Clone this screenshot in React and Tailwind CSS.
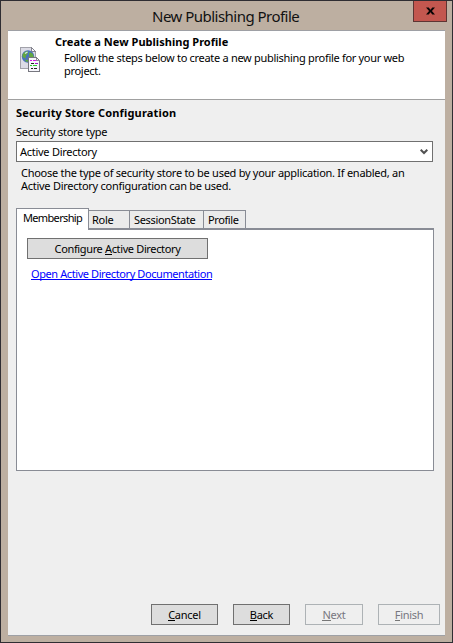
import React from "react";

const GlobePageIcon = () => (
  <svg className="shrink-0" width="20" height="25" viewBox="0 0 20 25" shapeRendering="crispEdges">
    <path d="M0.500 .5h11l4 4v17H.5z" fill="#dcdce6" stroke="#a2a2aa" />
    <path d="M11.500 .5v4h4z" fill="#fafaff" stroke="#85858f" />
    <g shapeRendering="auto">
      <circle cx="8" cy="9.500" r="6.200" fill="#4a72bd" />
      <path d="M2.500 7.500C4 4.800 6 4 8 4.300L7.500 7 6 8.500l-.5 3-3-1.500zM9.500 5l3 1.500 1.300 3-1.300 3-2.500-1.500-1-3zM5 12.500l3 .5-.5 2.300-2-1z" fill="#62a83f" />
      <path d="M5 6.500l2.500-1.500" stroke="#d3ecf4" strokeWidth="1.200" />
    </g>
    <path d="M8.500 10.500h8l3 3v11h-11z" fill="#f6f6fc" stroke="#77777f" />
    <path d="M16.500 10.500v3h3" fill="none" stroke="#8c8c96" />
    <path d="M10 13.500h2M13 13.500h3" stroke="#d818e8" />
    <path d="M11 16.500h3" stroke="#222" />
    <path d="M15 16.500h3" stroke="#a018c8" />
    <path d="M10 18.500h2M13 18.500h4" stroke="#30d030" />
    <path d="M11 21.500h2M14 21.500h3" stroke="#222" />
  </svg>
);

const Key = ({ children, disabled }) => (
  <span className={`inline-block h-[13px] border-b ${disabled ? "border-[#777]" : "border-black"}`}>{children}</span>
);

const Button = ({ className, disabled, children }) => (
  <button
    disabled={disabled}
    className={`flex h-[21px] shrink-0 items-center justify-center whitespace-nowrap border pb-px leading-[13px] ${
      disabled ? "border-[#adb2b5] bg-[#efefef] text-[#777780]" : "border-[#707070] bg-[#dddddd] text-black"
    } ${className}`}
  >
    <span>{children}</span>
  </button>
);

export default function App() {
  return (
    <div className="flex h-[643px] w-[453px] flex-col overflow-hidden border border-[#2f2d32] bg-[#bdafa1] font-['Noto_Sans',sans-serif] text-[11px] leading-[13px] tracking-[-0.27px] text-black">
      <header className="flex h-[29px] shrink-0 items-start">
        <h1 className="ml-[151px] w-[261px] whitespace-nowrap pt-[4px] text-[15px] leading-[22px] tracking-[-0.52px] text-[#111]">
          New Publishing Profile
        </h1>
        <button className="flex h-[21px] w-[34px] items-center justify-center border border-t-0 border-[#5d3533] bg-[#c3574f]">
          <svg width="9" height="8" viewBox="0 0 10 8">
            <path d="M0 0h3l2 2.500L7 0h3L6.600 4 10 8H7L5 5.500 3 8H0l3.400-4z" fill="#080404" />
          </svg>
        </button>
      </header>

      <main className="ml-[7px] flex h-[606px] w-[437px] shrink-0 flex-col border-y border-[#9ea0a5] bg-[#efefef]">
        <section className="flex h-[69px] shrink-0 border-b border-[#a0a0a0] bg-white pl-[12px] pt-[16px]">
          <GlobePageIcon />
          <div className="-mt-[12px] ml-[15px]">
            <h2 className="whitespace-nowrap font-bold tracking-[0.03px]">Create a New Publishing Profile</h2>
            <p className="ml-[9px] mt-[3px] whitespace-nowrap tracking-[-0.3px]">
              Follow the steps below to create a new publishing profile for your web
              <br />
              project.
            </p>
          </div>
        </section>

        <section className="flex flex-col px-2">
          <h3 className="mt-[6px] whitespace-nowrap font-bold tracking-[0.17px]">Security Store Configuration</h3>
          <label className="mt-[6px] whitespace-nowrap tracking-[-0.25px]">Security store type</label>
          <div className="mt-[3px] flex h-[21px] w-[417px] items-center justify-between border border-[#707070] bg-white pl-[3px] pr-[4px]">
            <span className="-mt-px">Active Directory</span>
            <svg width="8" height="6" viewBox="0 0 8 6">
              <path d="M.7 .7L4 4l3.300-3.300" fill="none" stroke="#505050" strokeWidth="2" />
            </svg>
          </div>
          <p className="ml-[5px] mt-[4px] whitespace-nowrap">
            Choose the type of security store to be used by your application. If enabled, an
            <br />
            Active Directory configuration can be used.
          </p>

          <nav className="mt-[16px] flex h-[20px] items-end">
            <div className="z-10 -mb-[2px] h-[22px] w-[73px] border border-b-0 border-[#898c95] bg-white pl-[6px] pt-[2px] tracking-[-0.66px]">Membership</div>
            <div className="h-[18px] w-[41px] border border-b-0 border-l-0 border-[#898c95] bg-[#ebebeb] pl-[3px] pt-[2px] tracking-[-0.3px]">Role</div>
            <div className="h-[18px] w-[74px] border border-b-0 border-l-0 border-[#898c95] bg-[#ebebeb] pl-[4px] pt-[2px] tracking-[-0.33px]">SessionState</div>
            <div className="h-[18px] w-[42px] border border-b-0 border-l-0 border-[#898c95] bg-[#ebebeb] pl-[4px] pt-[2px] tracking-[-0.4px]">Profile</div>
          </nav>
          <div className="h-[243px] w-[418px] border border-t-2 border-[#898c95] bg-white pl-[10px] pt-[8px]">
            <Button className="w-[181px] tracking-[-0.36px]">
              Configure <Key>A</Key>ctive Directory
            </Button>
            <a className="ml-[4px] mt-[9px] block w-fit whitespace-nowrap border-b border-[#0000ff] leading-[11px] tracking-[-0.41px] text-[#0000ff]">
              Open Active Directory Documentation
            </a>
          </div>
        </section>

        <footer className="mb-[10px] ml-[143px] mt-auto flex">
          <Button className="w-[67px]"><Key>C</Key>ancel</Button>
          <Button className="ml-[15px] w-[57px]"><Key>B</Key>ack</Button>
          <Button disabled className="ml-[15px] w-[58px]"><Key disabled>N</Key>ext</Button>
          <Button disabled className="ml-[15px] w-[62px]"><Key disabled>F</Key>inish</Button>
        </footer>
      </main>
    </div>
  );
}
